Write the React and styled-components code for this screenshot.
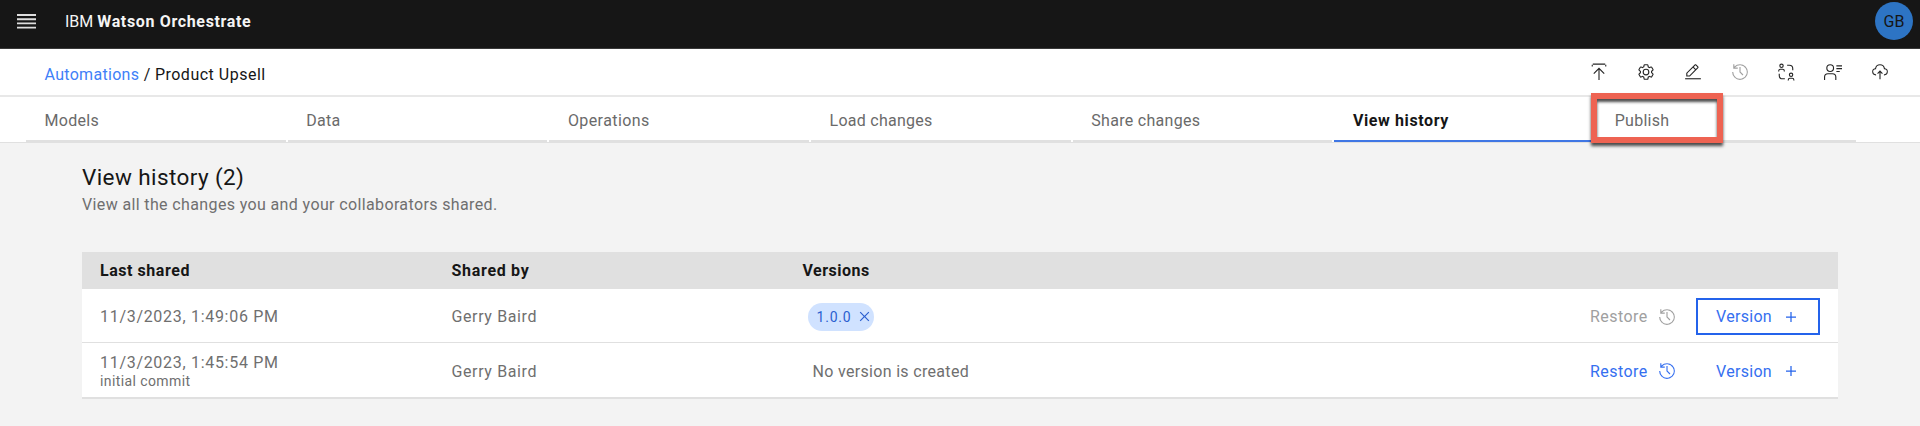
import React from "react";
import styled, { createGlobalStyle, css } from "styled-components";

const Global = createGlobalStyle`
  *, *::before, *::after { box-sizing: border-box; }
  body { margin: 0; background: #f3f3f3; font-family: Roboto, "Noto Sans", sans-serif; font-size: 16px; color: #161616; }
  button { font: inherit; border: 0; background: none; padding: 0; margin: 0; }
`;

const Page = styled.div`
  display: flex;
  flex-direction: column;
  height: 426px;
  overflow: hidden;
  background: #f3f3f3;
`;

const Header = styled.header`
  display: flex;
  align-items: flex-start;
  justify-content: space-between;
  height: 49px;
  padding: 2px 7px 0 16px;
  background: #161616;
  border-bottom: 1px solid #393939;
  color: #f4f4f4;
`;

const Brand = styled.div`
  display: flex;
  align-items: center;
  gap: 28px;
  height: 38px;
  white-space: nowrap;
`;

const MenuIcon = styled.svg`
  width: 21px;
  height: 17px;
  flex: none;
`;

const Text = styled.span`
  display: inline-block;
  white-space: nowrap;
  letter-spacing: ${(p) => p.$ls || 0}px;
  font-weight: ${(p) => (p.$bold ? 700 : 400)};
`;

const Avatar = styled.div`
  width: 38px;
  height: 38px;
  border-radius: 50%;
  background: #2d74c4;
  color: #161616;
  display: flex;
  align-items: center;
  justify-content: center;
`;

const Toolbar = styled.div`
  display: flex;
  align-items: center;
  justify-content: space-between;
  height: 48px;
  padding: 0 31px 0 44.5px;
  background: #fff;
  border-bottom: 2px solid #e8e8e8;
`;

const Crumbs = styled.nav`
  display: flex;
  gap: 4.5px;
  padding-top: 5px;
`;

const Link = styled.a`
  color: #4080f8;
`;

const Tools = styled.div`
  display: flex;
  gap: 28.8px;
`;

const Icon = styled.svg`
  width: ${(p) => p.$size || 18}px;
  height: ${(p) => p.$size || 18}px;
  flex: none;
  fill: ${(p) => p.$color || "#262626"};
`;

const Tabs = styled.div`
  display: flex;
  gap: 2px;
  height: 46px;
  padding-left: 26px;
  background: #fff;
  border-bottom: 1px solid #e0e0e0;
`;

const Tab = styled.div`
  position: relative;
  width: 259.7px;
  height: 45px;
  padding: 12px 0 0 18.5px;
  line-height: 23px;
  color: ${(p) => (p.$active ? "#161616" : "#6a6a6a")};
  border-bottom: 2px solid ${(p) => (p.$active ? "#3f76e4" : "#e0e0e0")};
`;

const Callout = styled.div`
  position: absolute;
  left: -5px;
  top: -4px;
  width: 132px;
  height: 50px;
  border: 6px solid #ee6352;
  box-shadow: 0 3px 3px rgba(0, 0, 0, 0.7), inset 0 3px 3px rgba(0, 0, 0, 0.7);
`;

const Main = styled.main`
  padding: 20px 82px 0;
`;

const Title = styled.h1`
  margin: 0 0 1px;
  font-size: 22.5px;
  font-weight: 400;
  line-height: 29px;
`;

const Subtitle = styled.p`
  margin: 0 0 35px;
  line-height: 24px;
  color: #6f6f6f;
`;

const rowGrid = css`
  display: grid;
  grid-template-columns: 351.5px 351px 1fr auto;
  align-items: center;
  padding: 0 18px;
`;

const HeadRow = styled.div`
  ${rowGrid}
  height: 37px;
  background: #e0e0e0;
`;

const Row = styled.div`
  ${rowGrid}
  padding-top: 2px;
  height: ${(p) => p.$h}px;
  background: #fff;
  color: #6f6f6f;
  border-bottom: ${(p) => p.$line || 1}px solid #e0e0e0;
`;

const Stack = styled.div`
  display: flex;
  flex-direction: column;
  line-height: 19px;
`;

const Note = styled.span`
  font-size: 14px;
  line-height: 18px;
`;

const Tag = styled.span`
  display: inline-flex;
  align-items: center;
  justify-content: space-between;
  width: 66px;
  height: 28px;
  margin-left: 5px;
  padding: 0 0 0 9px;
  border-radius: 14px;
  background: #d0e2ff;
  color: #2b5fd0;
  font-size: 14px;
`;

const NoVersion = styled.span`
  padding-left: 10px;
`;

const Actions = styled.div`
  display: flex;
  align-items: center;
  gap: 20px;
`;

const Action = styled.button`
  display: flex;
  align-items: center;
  justify-content: space-between;
  width: ${(p) => p.$w}px;
  height: 37px;
  padding: ${(p) => p.$pad || 0};
  color: ${(p) => (p.disabled ? "#a0a0a0" : "#356ff0")};
  border: ${(p) => (p.$focus ? 2 : 0)}px solid #2463eb;
`;

const ICONS = {
  upload: ["M6 18 7.41 19.41 15 11.83V30h2V11.83l7.59 7.58L26 18 16 8Z", "M3 6V3h2V1h22v2h2v3h-2V3H5v3Z"],
  settings: [
    "M27,16.76c0-.25,0-.5,0-.76s0-.51,0-.77l1.92-1.68A2,2,0,0,0,29.3,11L26.94,7a2,2,0,0,0-1.73-1,2,2,0,0,0-.64.1l-2.43.82a11.35,11.35,0,0,0-1.31-.75l-.51-2.52a2,2,0,0,0-2-1.61H13.64a2,2,0,0,0-2,1.61l-.51,2.52a11.48,11.48,0,0,0-1.32.75L7.43,6.06A2,2,0,0,0,6.79,6,2,2,0,0,0,5.06,7L2.7,11a2,2,0,0,0,.41,2.51L5,15.24c0,.25,0,.5,0,.76s0,.51,0,.77L3.11,18.45A2,2,0,0,0,2.7,21L5.06,25a2,2,0,0,0,1.73,1,2,2,0,0,0,.64-.1l2.43-.82a11.35,11.35,0,0,0,1.31.75l.51,2.52a2,2,0,0,0,2,1.61h4.72a2,2,0,0,0,2-1.61l.51-2.52a11.48,11.48,0,0,0,1.32-.75l2.42.82a2,2,0,0,0,.64.1,2,2,0,0,0,1.73-1L29.3,21a2,2,0,0,0-.41-2.51ZM25.21,24l-3.43-1.16a8.86,8.86,0,0,1-2.71,1.57L18.36,28H13.64l-.71-3.55a9.36,9.36,0,0,1-2.7-1.57L6.79,24,4.43,20l2.72-2.4a8.9,8.9,0,0,1,0-3.13L4.43,12,6.79,8l3.43,1.16a8.86,8.86,0,0,1,2.71-1.57L13.64,4h4.72l.71,3.55a9.36,9.36,0,0,1,2.7,1.57L25.21,8,27.57,12l-2.72,2.4a8.9,8.9,0,0,1,0,3.13L27.57,20Z",
    "M16,22a6,6,0,1,1,6-6A5.94,5.94,0,0,1,16,22Zm0-10a3.91,3.91,0,0,0-4,4,3.91,3.91,0,0,0,4,4,3.91,3.91,0,0,0,4-4A3.91,3.91,0,0,0,16,12Z",
  ],
  edit: ["M2 27H30V29H2z", "M25.4 9c.8-.8.8-2 0-2.8l-3.6-3.6c-.8-.8-2-.8-2.8 0l-15 15V24h6.4L25.4 9zM20.4 4L24 7.6l-3 3L17.4 7 20.4 4zM6 22v-3.6l10-10 3.6 3.6-10 10H6z"],
  history: ["M20.59 22 15 16.41V7h2v8.58l5 5.01Z", "M16,2A13.94,13.94,0,0,0,6,6.23V2H4v8h8V8H7.08A12,12,0,1,1,4,16H2A14,14,0,1,0,16,2Z"],
  swap: [
    "M8 1a4 4 0 1 0 0 8 4 4 0 0 0 0-8Zm0 2a2 2 0 1 1 0 4 2 2 0 0 1 0-4Z",
    "M2 15v-1a4 4 0 0 1 4-4h4a4 4 0 0 1 4 4v1h-2v-1a2 2 0 0 0-2-2H6a2 2 0 0 0-2 2v1Z",
    "M25 17a4 4 0 1 0 0 8 4 4 0 0 0 0-8Zm0 2a2 2 0 1 1 0 4 2 2 0 0 1 0-4Z",
    "M19 31v-1a4 4 0 0 1 4-4h4a4 4 0 0 1 4 4v1h-2v-1a2 2 0 0 0-2-2h-4a2 2 0 0 0-2 2v1Z",
    "M18 3h4a7 7 0 0 1 7 7v3h-2v-3a5 5 0 0 0-5-5h-4Z",
    "M3 19h2v3a5 5 0 0 0 5 5h4v2h-4a7 7 0 0 1-7-7Z",
  ],
  user: ["M22 4h10v2H22zM22 9h10v2H22zM22 14h6v2h-6z", "M11 2a7 7 0 1 0 0 14 7 7 0 0 0 0-14Zm0 2a5 5 0 1 1 0 10 5 5 0 0 1 0-10Z", "M0 30v-5a7 7 0 0 1 7-7h8a7 7 0 0 1 7 7v5h-2v-5a5 5 0 0 0-5-5H7a5 5 0 0 0-5 5v5Z"],
  cloud: [
    "M11 18 12.41 19.41 15 16.83V29h2V16.83l2.59 2.58L21 18l-5-5Z",
    "M23.5,22H23V20h.5a4.5,4.5,0,0,0,.36-9L23,11l-.1-.82a7,7,0,0,0-13.88,0L9,11,8.14,11a4.5,4.5,0,0,0,.36,9H9v2H8.5A6.5,6.5,0,0,1,7.2,9.14a9,9,0,0,1,17.6,0A6.5,6.5,0,0,1,23.5,22Z",
  ],
  close: ["M24 9.4 22.6 8 16 14.6 9.4 8 8 9.4l6.6 6.6L8 22.6 9.4 24l6.6-6.6 6.6 6.6 1.4-1.4-6.6-6.6Z"],
  add: ["M17 15V8h-2v7H8v2h7v7h2v-7h7v-2Z"],
};

const Glyph = ({ name, size, color }) => (
  <Icon viewBox="0 0 32 32" $size={size} $color={color}>
    {ICONS[name].map((d) => (
      <path key={d} d={d} fillRule="evenodd" />
    ))}
  </Icon>
);

const TOOLS = ["upload", "settings", "edit", "history", "swap", "user", "cloud"];
const TABS = [
  ["Models", 0.3],
  ["Data", 0.3],
  ["Operations", 0.42],
  ["Load changes", 0.25],
  ["Share changes", 0.3],
  ["View history", 0.6],
  ["Publish", 0.3],
];

const RowActions = ({ disabled, focus }) => (
  <Actions>
    <Action $w={86} disabled={disabled}>
      <Text $ls={0.45}>Restore</Text>
      <Glyph name="history" color={disabled ? "#a0a0a0" : "#356ff0"} />
    </Action>
    <Action $w={124} $pad={focus ? "0 17px 0 18px" : "0 19px 0 20px"} $focus={focus}>
      <Text $ls={0.3}>Version</Text>
      <Glyph name="add" size={20} color="#2463eb" />
    </Action>
  </Actions>
);

export default function App() {
  return (
    <Page>
      <Global />
      <Header>
        <Brand>
          <MenuIcon viewBox="0 0 21 17" fill="none" stroke="#dedede" strokeWidth="1.9">
            <path d="M1 2h19M1 6.2h19M1 10.4h19M1 14.6h19" />
          </MenuIcon>
          <div>
            <Text>IBM</Text> <Text $bold $ls={0.65}>Watson Orchestrate</Text>
          </div>
        </Brand>
        <Avatar><Text>GB</Text></Avatar>
      </Header>
      <Toolbar>
        <Crumbs>
          <Link><Text $ls={0.3}>Automations</Text></Link>
          <span>/</span>
          <Text $ls={0.5}>Product Upsell</Text>
        </Crumbs>
        <Tools>
          {TOOLS.map((t) => (
            <Glyph key={t} name={t} color={t === "history" ? "#a0a0a0" : undefined} />
          ))}
        </Tools>
      </Toolbar>
      <Tabs>
        {TABS.map(([label, ls]) => (
          <Tab key={label} $active={label === "View history"}>
            <Text $ls={ls} $bold={label === "View history"}>{label}</Text>
            {label === "Publish" && <Callout />}
          </Tab>
        ))}
      </Tabs>
      <Main>
        <Title><Text $ls={0.4}>View history (2)</Text></Title>
        <Subtitle><Text $ls={0.37}>View all the changes you and your collaborators shared.</Text></Subtitle>
        <HeadRow>
          <Text $bold $ls={0.55}>Last shared</Text>
          <Text $bold $ls={0.7}>Shared by</Text>
          <Text $bold $ls={0.5}>Versions</Text>
        </HeadRow>
        <Row $h={54}>
          <Text $ls={0.7}>11/3/2023, 1:49:06 PM</Text>
          <Text $ls={0.62}>Gerry Baird</Text>
          <div>
            <Tag><Text $ls={0.8}>1.0.0</Text><Glyph name="close" size={19} color="#2b5fd0" /></Tag>
          </div>
          <RowActions disabled focus />
        </Row>
        <Row $h={56} $line={2}>
          <Stack>
            <Text $ls={0.7}>11/3/2023, 1:45:54 PM</Text>
            <Note><Text $ls={0.4}>initial commit</Text></Note>
          </Stack>
          <Text $ls={0.62}>Gerry Baird</Text>
          <NoVersion><Text $ls={0.32}>No version is created</Text></NoVersion>
          <RowActions />
        </Row>
      </Main>
    </Page>
  );
}
